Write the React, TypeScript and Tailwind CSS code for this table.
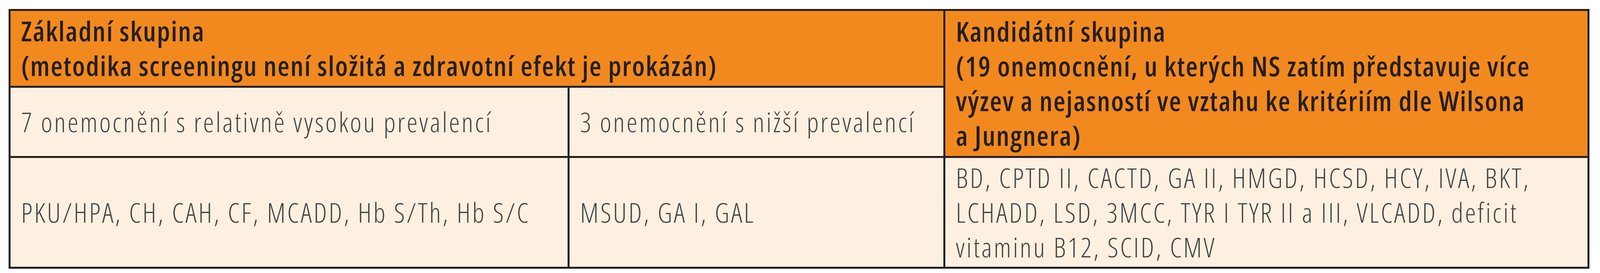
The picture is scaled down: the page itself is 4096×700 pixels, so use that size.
const font = { fontFamily: '"Open Sans", "DejaVu Sans Condensed", sans-serif' };

export default function App() {
    return (
        <div className="h-[700px] w-[4096px] bg-white pl-[22px] pt-[23px]" style={font}>
            <table className="w-[4042px] table-fixed border-collapse border-[5px] border-[#231f20] text-[70px] leading-[89px] font-stretch-condensed">
                <colgroup>
                    <col className="w-[1431px]" />
                    <col className="w-[962px]" />
                    <col className="w-[1649px]" />
                </colgroup>
                <tbody>
                    <tr className="h-[197px]">
                        <td
                            colSpan={2}
                            className="border-[5px] border-[#231f20] bg-[#f2891f] px-[27px] align-middle font-semibold tracking-[0.035em] whitespace-nowrap text-[#231f20]"
                        >
                            Základní skupina
                            <br />
                            (metodika screeningu není složitá a zdravotní efekt je prokázán)
                        </td>
                        <td
                            rowSpan={2}
                            className="border-[5px] border-[#231f20] bg-[#f2891f] px-[27px] align-middle font-semibold tracking-[0.035em] whitespace-nowrap text-[#231f20]"
                        >
                            Kandidátní skupina
                            <br />
                            (19 onemocnění, u kterých NS zatím představuje více
                            <br />
                            výzev a nejasností ve vztahu ke kritériím dle Wilsona
                            <br />
                            a Jungnera)
                        </td>
                    </tr>
                    <tr className="h-[180px]">
                        <td className="border-[5px] border-[#231f20] bg-[#fdf0e1] px-[27px] align-middle font-light tracking-[0.065em] whitespace-nowrap text-[#444]">
                            7 onemocnění s relativně vysokou prevalencí
                        </td>
                        <td className="border-[5px] border-[#231f20] bg-[#fdf0e1] px-[27px] align-middle font-light tracking-[0.065em] whitespace-nowrap text-[#444]">
                            3 onemocnění s nižší prevalencí
                        </td>
                    </tr>
                    <tr className="h-[284px]">
                        <td className="border-[5px] border-[#231f20] bg-[#fdf0e1] px-[27px] align-middle font-light tracking-[0.065em] whitespace-nowrap text-[#444]">
                            PKU/HPA, CH, CAH, CF, MCADD, Hb S/Th, Hb S/C
                        </td>
                        <td className="border-[5px] border-[#231f20] bg-[#fdf0e1] px-[27px] align-middle font-light tracking-[0.065em] whitespace-nowrap text-[#444]">
                            MSUD, GA I, GAL
                        </td>
                        <td className="border-[5px] border-[#231f20] bg-[#fdf0e1] px-[27px] align-middle font-light tracking-[0.065em] whitespace-nowrap text-[#444]">
                            BD, CPTD II, CACTD, GA II, HMGD, HCSD, HCY, IVA, BKT,
                            <br />
                            LCHADD, LSD, 3MCC, TYR I TYR II a III, VLCADD, deficit
                            <br />
                            vitaminu B12, SCID, CMV
                        </td>
                    </tr>
                </tbody>
            </table>
        </div>
    );
}
